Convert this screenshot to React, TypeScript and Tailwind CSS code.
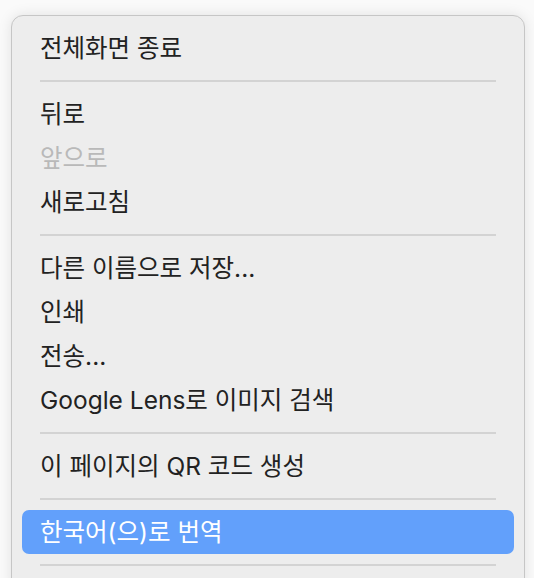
import React from "react";

type Entry =
  | { kind: "item"; label: string; disabled?: boolean; active?: boolean }
  | { kind: "sep" };

const entries: Entry[] = [
  { kind: "item", label: "전체화면 종료" },
  { kind: "sep" },
  { kind: "item", label: "뒤로" },
  { kind: "item", label: "앞으로", disabled: true },
  { kind: "item", label: "새로고침" },
  { kind: "sep" },
  { kind: "item", label: "다른 이름으로 저장..." },
  { kind: "item", label: "인쇄" },
  { kind: "item", label: "전송..." },
  { kind: "item", label: "Google Lens로 이미지 검색" },
  { kind: "sep" },
  { kind: "item", label: "이 페이지의 QR 코드 생성" },
  { kind: "sep" },
  { kind: "item", label: "한국어(으)로 번역", active: true },
  { kind: "sep" },
];

const MenuRow: React.FC<{ label: string; disabled?: boolean; active?: boolean }> = ({
  label,
  disabled,
  active,
}) => {
  const tone = active
    ? "bg-[#62a0fb] text-white"
    : disabled
      ? "text-[#b9b9b9]"
      : "text-[#222222]";
  return (
    <div className={`flex h-[44px] items-center rounded-[7px] px-[18px] ${tone}`}>
      <span className="text-[24.5px] leading-none">{label}</span>
    </div>
  );
};

export default function App() {
  return (
    <div
      className="h-[578px] w-[534px] overflow-hidden bg-[#fafafa]"
      style={{ fontFamily: '"Inter", "Noto Sans CJK KR", sans-serif' }}
    >
      <div className="ml-[11px] mt-[15px] w-[514px] rounded-[12px] border border-[#c6c6c6] bg-[#ededed] px-[10px] pb-[20px] pt-[10px] shadow-[0_0_14px_rgba(0,0,0,0.10)]">
        {entries.map((e, i) =>
          e.kind === "sep" ? (
            <div key={i} className="px-[18px] py-[10px]">
              <div className="h-[2px] bg-[#d3d3d3]" />
            </div>
          ) : (
            <MenuRow key={i} label={e.label} disabled={e.disabled} active={e.active} />
          ),
        )}
      </div>
    </div>
  );
}
